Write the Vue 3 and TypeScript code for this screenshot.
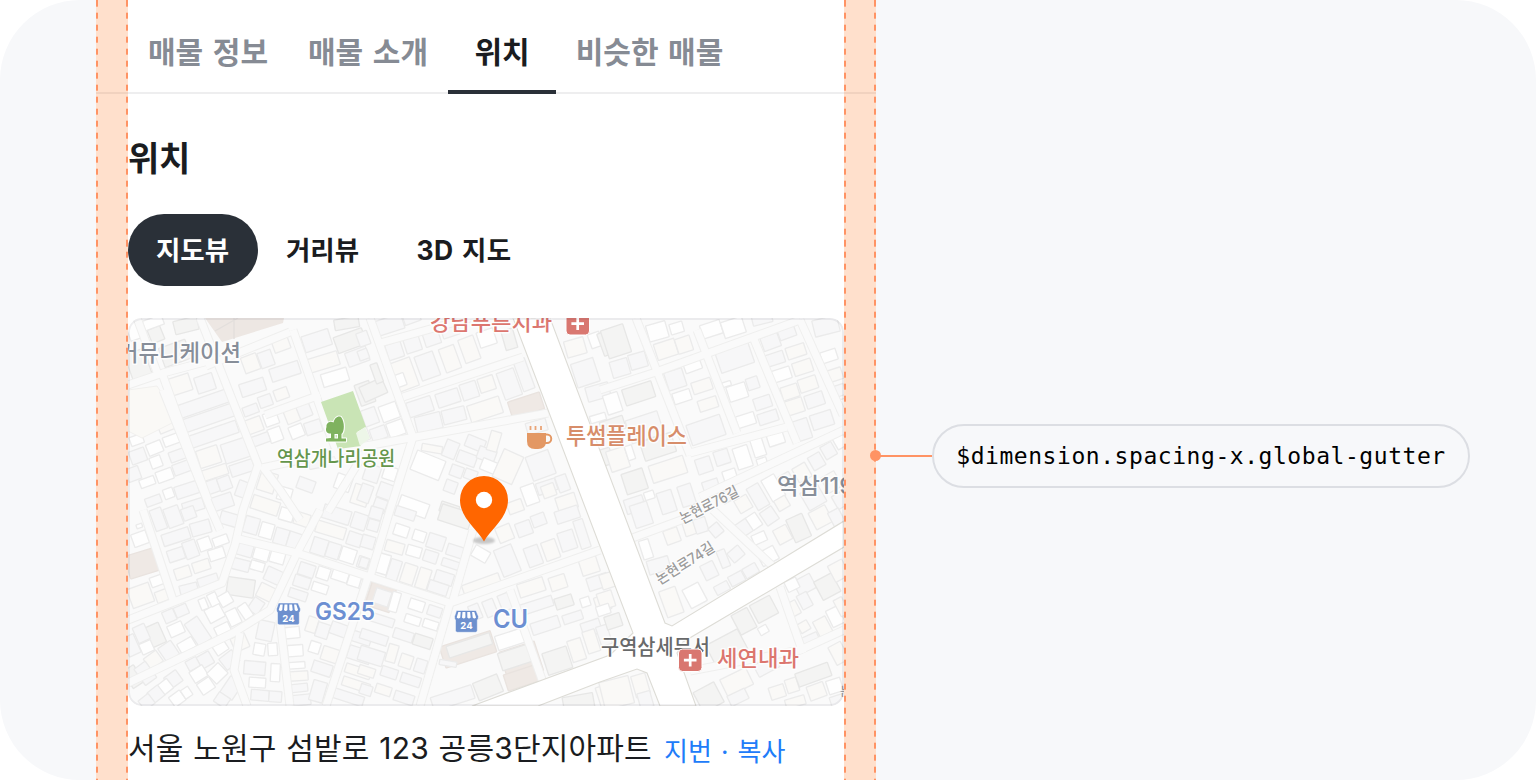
<script setup lang="ts">
type Kind = 'plain' | 'white' | 'cream' | 'beige' | 'gray'
interface Building { cx: number; cy: number; w: number; h: number; rot: number; kind: Kind }
interface Tile { x: number; y: number; buildings: Building[] }
interface MapLabel { text: string; x: number; y: number; size: number; length: number; color: string; weight: number; halo: number; rot: number }

const kinds: Record<string, Kind> = { p: 'plain', w: 'white', c: 'cream', b: 'beige', g: 'gray' }

// Each entry reads "cx cy width height rotation kind", in thirds of a pixel from the tile origin.
function tile(x: number, y: number, source: string): Tile {
  const buildings = source.trim().split(',').map((entry) => {
    const [cx, cy, w, h, rot, kind] = entry.trim().split(' ')
    return { cx: +cx, cy: +cy, w: +w, h: +h, rot: +rot, kind: kinds[kind] }
  })
  return { x, y, buildings }
}

const tiles: Tile[] = [
  tile(120, 310, `
    198 46 72 40 -14 g,108 74 40 44 -22 g,55 165 60 84 -20 g,165 130 84 60 -20 g,100 38 60 30 -20 w,40 60 36 60 -20 w,
    178 224 70 52 -18 c,255 220 56 50 -18 p,392 160 48 50 -20 c,438 147 42 48 -20 p,483 103 50 40 -20 c,495 184 90 40 -18 p,
    590 92 84 50 -18 p,610 156 94 42 -17 c,690 92 90 50 -20 g,712 140 66 44 -20 p,680 40 74 32 -10 g,645 202 80 40 -17 w,
    398 232 76 40 -18 p,484 252 42 34 -20 c,248 282 160 40 -19 p,262 325 164 40 -19 p,278 374 156 38 -19 p,392 300 46 28 -20 p,
    436 273 40 34 -20 p,402 346 50 44 -20 c,453 326 42 40 -20 w,466 374 40 42 -20 w,422 388 54 30 -20 p,516 316 42 44 -22 c,
    553 302 40 42 -22 p,530 364 42 38 -22 w,580 352 50 38 -18 p,138 350 46 30 -22 c,104 414 46 36 -22 w,154 390 48 30 -20 w,
    50 390 40 28 -20 w,54 438 48 40 -20 p,108 456 34 34 -20 w,172 436 48 32 -20 p,184 474 50 34 -20 p,82 516 46 26 -20 w,
    134 496 50 34 -20 w,40 492 40 40 -20 p,266 440 66 54 -18 c,346 422 76 60 -18 p,282 488 84 32 -18 c,366 474 72 36 -18 p,
    442 516 52 60 18 c,494 552 42 40 16 w,558 524 52 36 20 p,670 518 48 46 20 w,722 556 50 60 18 c,276 530 40 40 -20 p,
    314 520 38 40 -20 p,368 538 36 48 20 p,200 540 70 38 -18 p,146 550 30 30 -20 w,100 572 48 26 -20 p,306 576 66 42 -18 p,
    220 588 64 34 -18 p,436 586 84 42 18 c,586 458 40 34 -10 p,735 250 46 66 -20 g,728 374 36 40 -20 w`),
  tile(360, 310, `
    90 44 80 46 -18 p,155 24 50 30 -20 p,104 122 48 48 -18 p,158 104 48 44 -18 p,216 86 48 40 -18 p,270 60 52 40 -18 p,
    132 194 66 90 -20 c,202 168 58 76 -20 p,270 146 48 74 -20 c,328 118 48 74 -20 c,380 84 52 48 -18 w,448 88 36 60 -16 g,
    122 210 28 38 -20 w,40 240 74 48 -24 g,50 190 22 60 -20 g,10 86 34 42 -20 p,10 134 30 30 -20 p,88 306 54 50 -20 w,
    30 320 44 50 -20 p,108 356 50 46 -20 w,56 370 48 38 -20 p,180 290 76 46 -18 p,264 264 70 42 -18 p,328 242 50 50 -18 p,
    380 222 48 44 -18 c,448 222 54 84 -20 p,492 194 36 96 -20 p,375 298 100 52 -18 c,206 338 78 50 -14 p,282 316 70 42 -14 p,
    498 286 100 52 -18 b,216 416 62 22 10 c,272 418 40 52 22 p,320 446 58 36 20 p,346 400 58 36 22 p,380 434 54 38 20 p,
    402 394 32 60 16 c,386 468 46 36 22 w,290 484 38 34 20 p,332 494 38 30 20 p,272 530 36 36 20 p,204 466 92 62 22 w,
    90 490 40 40 18 w,36 490 46 50 18 p,78 544 48 46 20 p,16 550 36 54 20 p,60 586 38 40 20 p,160 590 90 44 20 w,
    268 596 56 30 18 g,444 470 64 90 24 c,542 466 72 76 -20 p,560 530 60 36 -18 p,510 554 42 60 -20 w,566 542 40 38 -20 c,
    608 520 34 50 -20 p,620 578 60 46 -18 c,466 590 46 36 -20 c,530 350 62 36 -16 p,646 112 60 50 -16 c,676 188 70 74 -18 p,
    706 90 36 44 -20 w,738 100 34 70 -20 g,714 246 70 44 -16 p,714 324 48 22 -16 w,740 440 30 50 -16 g`),
  tile(600, 310, `
    48 94 70 88 -18 g,60 174 54 50 -16 p,114 152 52 46 -16 p,172 64 60 50 -16 w,230 54 40 32 -16 w,198 118 64 50 -18 c,
    252 104 46 46 -18 c,334 58 62 42 -18 w,400 52 66 50 -18 w,404 142 104 66 -19 p,512 96 54 42 -20 p,560 66 52 38 -20 p,
    526 146 54 36 -18 p,588 124 58 36 -18 c,544 194 58 36 -18 w,608 172 58 40 -18 c,624 222 56 40 -18 c,570 246 52 40 -18 c,
    582 290 58 44 -18 c,644 270 56 40 -18 p,666 330 66 46 -18 p,604 360 52 62 -18 p,687 138 48 34 -18 w,706 194 42 36 -18 c,
    716 242 38 34 -18 p,724 286 34 34 -18 w,678 48 76 50 -14 p,486 26 60 32 -14 p,276 162 52 44 -20 w,226 208 56 56 -18 p,
    246 260 54 34 -18 w,306 228 60 36 -18 c,324 282 58 34 -18 c,380 222 26 14 -18 w,412 246 58 46 -18 w,458 220 36 36 -18 p,
    488 278 52 36 -18 p,504 322 60 34 -18 p,438 330 56 36 -18 w,318 360 106 64 -19 p,116 250 92 50 -18 g,38 280 46 60 -18 w,
    134 352 100 72 -18 p,38 346 72 40 -18 g,54 448 58 64 -18 c,90 428 22 44 -18 w,174 410 98 60 -18 g,204 478 108 54 -18 c,
    104 514 66 64 -18 g,148 556 30 24 -18 w,104 584 58 44 -18 p,200 576 46 66 -18 p,260 556 42 64 -18 p,312 466 46 46 -18 p,
    366 442 44 44 -18 p,428 442 46 66 -18 w,474 410 36 60 -18 w,488 462 30 36 -18 w,526 382 50 46 -18 w,390 498 40 38 -18 w,
    334 532 48 44 -18 p,386 556 46 34 -28 p,430 582 42 44 -30 c,474 560 40 74 -30 p,520 534 44 74 -30 w,560 512 36 44 -30 p,
    606 488 44 48 -30 c,650 454 40 44 -30 p,686 422 38 42 -30 p,720 392 36 44 -30 w,546 580 38 36 -30 c,640 562 60 60 -30 p,
    694 516 46 52 -30 c,722 570 40 44 -30 p`),
  tile(120, 510, `
    115 28 36 66 -20 p,160 20 46 60 -20 p,206 10 40 36 -20 p,60 86 46 40 -20 w,58 48 18 12 -20 w,66 160 92 70 -17 b,
    168 80 84 36 -18 p,242 54 60 40 -16 p,168 134 50 36 -18 p,212 118 40 52 -20 p,254 102 38 38 -20 w,302 92 46 28 -20 w,
    290 132 48 34 -18 w,188 188 48 34 -18 c,244 168 52 32 -18 c,112 212 42 30 -20 w,62 256 68 60 -20 c,126 258 38 34 -20 c,
    206 236 54 28 -14 p,264 212 62 28 -18 p,330 28 60 38 16 p,394 46 44 50 16 p,440 62 40 46 16 w,484 80 42 48 16 p,
    524 92 42 48 18 p,500 14 42 38 16 w,546 28 46 38 18 c,650 14 84 42 17 p,632 60 90 36 17 c,718 34 44 48 18 p,
    704 88 44 40 18 p,374 118 50 40 16 p,424 132 46 38 16 w,472 142 44 36 16 w,360 164 58 34 14 p,412 168 42 28 16 w,
    462 198 54 42 24 p,362 232 82 54 8 g,440 248 54 44 26 c,408 288 36 44 34 p,598 110 46 50 18 p,640 122 40 46 18 p,
    684 136 46 44 18 w,730 158 34 34 18 p,560 180 48 38 18 p,610 190 38 36 18 w,660 198 50 30 18 w,704 212 40 36 18 w,
    546 216 50 34 18 p,600 234 48 28 18 w,534 254 56 28 18 p,284 310 50 44 -28 w,250 282 22 34 -22 w,280 268 28 38 -26 w,
    316 268 38 36 -30 w,340 322 36 48 -26 w,376 304 30 46 -34 w,308 358 46 30 -26 w,234 364 46 80 -34 p,168 358 46 36 -24 w,
    184 302 40 32 -24 p,148 318 36 36 -24 p,104 376 50 64 -24 g,64 370 38 50 -24 p,80 412 38 34 -24 w,146 424 46 50 -34 p,
    200 406 50 34 -30 w,100 450 46 40 -36 c,34 406 38 60 -24 p,40 500 40 60 -34 g,76 490 42 60 -36 p,256 450 42 40 -30 p,
    218 462 36 32 -28 p,236 492 46 38 -32 w,292 490 48 44 -44 w,328 450 48 42 -38 p,302 414 40 32 -34 w,258 528 44 38 -34 w,
    160 508 44 40 -36 p,136 530 36 36 -38 w,108 552 40 38 -38 p,172 566 40 36 -36 w,200 548 26 30 -34 w,80 576 38 36 -38 p,
    360 398 46 44 -24 c,436 362 48 58 12 p,418 418 34 36 10 w,458 418 28 38 -4 w,404 474 64 40 5 p,466 488 28 54 3 w,
    412 518 50 30 4 w,420 556 54 32 5 p,466 560 38 32 4 p,334 534 44 60 34 p,306 570 40 34 34 p,516 368 46 34 -6 w,
    526 422 46 34 -4 w,530 466 50 20 -4 w,536 498 56 28 -4 c,536 534 54 24 -6 p,544 570 56 32 -6 p,576 344 32 46 18 c,
    608 362 38 44 18 p,656 358 50 38 20 p,584 412 32 34 18 w,630 434 50 42 18 c,606 476 60 36 18 p,594 544 42 62 16 p,
    716 382 76 32 18 p,718 434 70 40 18 p,714 484 78 28 18 c,708 524 84 28 18 c,686 562 92 30 18 p,742 254 30 84 18 b`),
  tile(360, 510, `
    48 10 38 36 16 p,40 46 34 34 16 p,24 96 40 38 16 p,12 158 26 30 18 p,14 225 30 30 16 p,136 10 62 30 18 p,
    124 62 44 34 18 w,178 78 38 32 18 w,228 96 52 44 18 p,288 124 56 34 18 p,104 112 56 34 16 c,162 124 44 32 16 w,
    212 140 42 34 18 p,272 162 54 24 18 p,70 162 34 60 16 w,102 180 34 62 18 p,146 192 40 60 18 c,190 206 36 62 18 c,
    252 204 56 36 18 p,234 234 60 34 18 p,286 20 96 50 18 g,62 262 76 72 18 b,66 262 48 46 18 p,104 276 26 60 16 w,
    170 286 46 32 18 w,224 304 42 30 18 p,158 330 48 26 18 w,212 344 46 26 18 w,434 70 46 48 -22 c,492 56 46 42 -20 p,
    536 30 42 36 -20 p,622 14 72 38 -18 p,666 72 30 88 -18 p,622 92 48 58 -18 p,572 120 44 58 -20 c,520 138 44 60 -20 p,
    442 152 56 86 -22 p,362 132 50 36 30 w,364 222 116 30 -20 c,514 232 80 42 -18 c,594 218 50 42 -18 c,688 168 54 48 -18 c,
    714 216 64 40 -18 p,530 286 100 32 -18 p,612 276 54 34 -18 g,556 346 86 36 -18 p,638 322 60 28 -18 p,694 354 58 44 -18 p,
    676 276 28 28 -18 w,728 280 44 46 -18 c,390 294 34 50 -22 p,436 276 34 50 -22 p,346 306 32 46 -22 p,450 388 84 44 -18 w,
    324 418 160 66 -18 b,328 406 136 36 -18 g,264 460 52 16 10 p,484 454 110 92 -18 b,466 442 96 54 -18 g,484 504 98 50 -18 b,
    592 452 76 68 -18 g,650 420 42 66 -18 c,694 394 38 68 -18 c,732 376 34 60 -18 p,384 532 78 56 -22 g,278 564 128 42 -18 p,
    130 376 60 30 18 p,188 394 56 34 18 g,96 430 30 54 16 c,138 454 38 40 18 c,182 468 34 40 18 p,88 488 50 30 18 p,
    152 510 60 30 18 p,70 540 48 28 18 c,132 564 60 30 18 p,18 540 36 30 18 p,34 438 76 44 17 p,20 484 50 28 18 c,
    42 382 84 30 18 p,66 330 74 26 18 p,656 580 92 50 -10 g,740 560 50 70 -18 c`),
  tile(600, 510, `
    124 14 54 70 -18 p,216 78 44 44 -20 c,268 54 34 44 -18 c,302 46 38 44 -18 p,348 60 34 36 -40 p,138 118 30 58 -18 w,
    176 166 66 42 -16 p,408 132 42 36 -40 p,370 146 26 54 -22 p,328 182 42 48 -26 p,284 256 54 62 -28 w,214 276 52 82 -20 c,
    366 234 44 28 -28 p,410 206 46 32 -28 p,452 182 44 32 -30 p,504 138 54 44 -28 w,478 84 42 30 -24 w,432 54 42 44 -34 p,
    462 34 34 44 -34 w,508 18 42 46 -34 p,548 74 44 48 -28 c,596 54 52 74 -24 g,662 22 56 56 -28 c,710 24 36 50 -28 p,
    432 334 54 66 -28 g,492 298 68 60 -28 g,380 412 108 68 -28 g,490 360 28 24 -30 w,614 224 56 48 -28 p,682 230 60 62 -28 g,
    716 182 48 54 -28 c,576 224 38 34 -26 w,580 296 32 44 -28 c,614 272 34 46 -28 p,612 350 32 30 -30 c,630 392 56 34 -24 p,
    668 350 42 52 -28 c,706 320 40 54 -26 w,724 290 28 54 -28 c,22 212 40 46 -18 c,18 270 46 50 -18 c,40 334 48 40 -18 g,
    10 300 40 30 -18 w,326 562 70 68 -28 g,410 516 86 56 -26 c,414 562 58 34 -26 p,532 546 46 38 -18 c,576 526 36 42 -18 c,
    640 494 104 42 -20 g,650 544 52 44 -20 c,704 528 44 42 -18 w,716 574 48 38 -18 p,716 430 42 60 -28 c,500 468 70 40 -28 p,
    50 548 90 84 -14 c,122 526 44 66 -16 c,136 570 40 48 -16 p,586 576 60 28 -16 c`),
]

const streets: string[] = [
  'M200 318 258 465 243 510 235 545 222 583 128 620', 'M163 390 210 507 220 530', 'M128 385 163 373 212 360', 'M137 318 157 372',
  'M293 330 327 427 340 460', 'M262 468 360 447 410 438 548 413', 'M370 318 413 437 390 510 370 577', 'M403 397 523 357', 'M380 343 470 318',
  'M235 538 297 553 370 577 450 603 600 550', 'M450 603 420 706', 'M473 530 453 600', 'M143 510 173 600', 'M128 683 233 633 270 610 297 553 320 510',
  'M240 633 234 670 247 706', 'M280 620 290 706', 'M368 577 326 706', 'M636 318 690 455', 'M600 390 653 373 800 320', 'M800 320 843 415',
  'M697 330 737 433', 'M753 337 797 443', 'M690 453 787 427', 'M700 497 844 430', 'M627 540 700 513', 'M713 510 780 573', 'M780 587 803 653',
  'M690 671 800 650 844 630', 'M290 332 206 366', 'M265 415 320 395', 'M163 376 208 500', 'M510 590 545 688', 'M360 460 328 512', 'M262 466 280 490 300 520',
]

const labels: MapLabel[] = [
  { text: '커뮤니케이션', x: 118, y: 361, size: 23, length: 123, color: '#878e99', weight: 500, halo: 3, rot: 0 },
  { text: '강남푸른치과', x: 430, y: 330, size: 22, length: 122, color: '#dc766f', weight: 500, halo: 3, rot: 0 },
  { text: '역삼개나리공원', x: 277, y: 466, size: 20, length: 118, color: '#65964c', weight: 500, halo: 3, rot: 0 },
  { text: '투썸플레이스', x: 566, y: 444, size: 23, length: 121, color: '#d78d6a', weight: 500, halo: 3, rot: 0 },
  { text: '역삼119', x: 777, y: 494, size: 23, length: 77, color: '#878e99', weight: 500, halo: 3, rot: 0 },
  { text: '논현로76길', x: 683, y: 524, size: 15, length: 64, color: '#9c9c9c', weight: 500, halo: 2, rot: -27 },
  { text: '논현로74길', x: 660, y: 585, size: 15, length: 66, color: '#9c9c9c', weight: 500, halo: 2, rot: -32 },
  { text: 'GS25', x: 315, y: 620, size: 24, length: 60, color: '#6c8fd2', weight: 600, halo: 3, rot: 0 },
  { text: 'CU', x: 493, y: 628, size: 25, length: 35, color: '#6c8fd2', weight: 600, halo: 3, rot: 0 },
  { text: '구역삼세무서', x: 601, y: 654, size: 21, length: 109, color: '#68696a', weight: 500, halo: 3, rot: 0 },
  { text: '세연내과', x: 717, y: 666, size: 22, length: 82, color: '#dc766f', weight: 500, halo: 3, rot: 0 },
]
const crosses = [{ x: 565.5, y: 312 }, { x: 678, y: 648.5 }]
const stores = [{ x: 276.5, y: 603 }, { x: 454.5, y: 610.5 }]
const tabs = [
  { name: '매물 정보', active: false }, { name: '매물 소개', active: false },
  { name: '위치', active: true }, { name: '비슷한 매물', active: false },
]
const views = [{ name: '지도뷰', active: true }, { name: '거리뷰', active: false }, { name: '3D 지도', active: false }]
</script>

<template>
  <main class="stage">
    <section class="screen">
      <nav class="tabs">
        <span v-for="tab in tabs" :key="tab.name" class="tab" :class="{ active: tab.active }">{{ tab.name }}</span>
      </nav>
      <div class="content">
        <h2 class="title">위치</h2>
        <div class="views">
          <span v-for="view in views" :key="view.name" class="view" :class="{ active: view.active }">{{ view.name }}</span>
        </div>
        <div class="map">
          <svg width="716" height="388" viewBox="128 318 716 388">
            <rect x="128" y="318" width="716" height="388" fill="#fafafa" />
            <g v-for="(t, i) in tiles" :key="i" :transform="`translate(${t.x} ${t.y}) scale(.33333)`">
              <rect
                v-for="(b, j) in t.buildings" :key="j" :class="['building', b.kind]"
                :x="b.cx - b.w / 2" :y="b.cy - b.h / 2" :width="b.w" :height="b.h" rx="2"
                :transform="`rotate(${b.rot} ${b.cx} ${b.cy})`"
              />
            </g>
            <path d="M205 318H284L283 323 222 342Z" fill="#ede7e3" />
            <path d="M234 318V339M215 331 238 318" class="outline" />
            <path d="M128 390 157 386 166 400 174 422 142 438 128 431Z" fill="#faf9f6" stroke="#f1f0ee" />
            <g class="street-edge"><path v-for="d in streets" :key="d" :d="d" /></g>
            <g class="street"><path v-for="d in streets" :key="d" :d="d" /></g>
            <path d="M513 318 633 633 610 655 472 706H538L600 682 637 669 647 673 660 706H696L677 653 683 642 844 547V521L672 626 665 623 550 318Z" class="road" />
            <path d="M321 402 353 391 366 427 357 432 361 446 338 449Z" fill="#c9e4b5" />
            <path d="M356 433 365 427 370 438 360 446Z" fill="#edf6e8" />

            <text
              v-for="label in labels" :key="label.text" class="label" :x="label.x" :y="label.y" :fill="label.color"
              :font-size="label.size" :font-weight="label.weight" :textLength="label.length" lengthAdjust="spacingAndGlyphs"
              :stroke-width="label.halo" :transform="`rotate(${label.rot} ${label.x} ${label.y})`"
            >{{ label.text }}</text>

            <g stroke="#fff" stroke-width="2" stroke-linejoin="round" paint-order="stroke" fill="#7fb25f">
              <path d="M331 438V433.500C327 434 325 431 326.500 427C326 423 330 420.500 333.500 422.500C334.500 418 338 415.500 341 417C345 422 344.500 432 341.500 434V438.500H346V441.500H326V438.500ZM334.500 434V438.500H338V434Z" fill-rule="evenodd" />
            </g>
            <g v-for="c in crosses" :key="c.x" :transform="`translate(${c.x} ${c.y})`">
              <rect x=".5" y=".5" width="23.5" height="22.5" rx="4" fill="#d97770" stroke="#fff" />
              <path d="M12.2 5.5V18M5.9 11.7H18.500" stroke="#fff" stroke-width="2.7" />
            </g>
            <g transform="translate(527 426)">
              <path d="M3.500 0V4M8.500 0V4M14 0V4" stroke="#e9a477" stroke-width="1.8" />
              <path d="M19 8.500H20A4 4 0 0 1 20 17H18" fill="none" stroke="#e39864" stroke-width="2" />
              <path d="M0 7H19V15Q19 23 11 23H8Q0 23 0 15Z" fill="#e39864" />
            </g>
            <g v-for="s in stores" :key="s.x" :transform="`translate(${s.x} ${s.y})`">
              <path d="M2 0H21.500L24 6Q24 9 22.800 9.500V20Q22.800 21.800 21 21.800H2.800Q1 21.800 1 20V9.500Q0 9 0 6Z" fill="#6d90ce" stroke="#fff" stroke-width=".5" />
              <path d="M3.800 1.500H6.200L5.800 7Q4 9 2.200 7ZM8 1.500H10.900V7Q9.200 9 7.500 7ZM12.800 1.500H15.600L16.200 7Q14.500 9 12.800 7ZM17.600 1.500H19.800L21.600 7Q19.800 9 18.200 7Z" fill="#fff" />
              <text x="12" y="18.500" class="store-text">24</text>
            </g>
            <text x="840" y="696" font-size="12" fill="#8e9095">논</text>

            <ellipse cx="484" cy="540.5" rx="11" ry="3.6" fill="#000" opacity=".2" class="shadow" />
            <path d="M484 541.5C478 530 460 518 460 500A24 24 0 0 1 508 500C508 518 490 530 484 541.5Z" fill="#f60" />
            <circle cx="484" cy="500" r="8.2" fill="#fff" />
          </svg>
        </div>
        <div class="address">
          <span class="street-name">서울 노원구 섬밭로 123 공릉3단지아파트</span>
          <span class="links">지번 · 복사</span>
        </div>
      </div>
      <div class="gutter left"></div>
      <div class="gutter right"></div>
    </section>
    <aside class="annotation">
      <span class="connector"></span>
      <code class="token">$dimension.spacing-x.global-gutter</code>
    </aside>
  </main>
</template>

<style>
body { margin: 0; background: #fff; }
</style>

<style scoped>
.stage {
  box-sizing: border-box; width: 1536px; height: 780px; padding-left: 96px; display: flex; overflow: hidden;
  border-radius: 80px; background: #f7f8fa; color: #1a1c20;
  font-family: Inter, "Noto Sans CJK KR", sans-serif;
}
.screen { position: relative; width: 780px; height: 780px; flex: none; background: #fff; }
.tabs { box-sizing: border-box; display: flex; height: 94px; padding: 0 32px; border-bottom: 2px solid #eeeeef; }
.tab {
  box-sizing: border-box; height: 94px; width: 160px; display: flex; justify-content: center; align-items: center;
  padding-top: 13px; border-bottom: 4px solid transparent;
  color: #868b94; font-size: 30px; font-weight: 700; line-height: 40px; word-spacing: 2.5px; white-space: nowrap;
}
.tab.active { width: 108px; color: #1a1c20; border-bottom-color: #2a3038; }
.tab:last-child { width: 187px; }
.content { padding: 0 32px; }
.title { margin: 41px 0 0; height: 48px; font-size: 34px; line-height: 48px; font-weight: 700; letter-spacing: -.3px; }
.views { display: flex; margin-top: 31px; height: 72px; }
.view {
  box-sizing: border-box; width: 130px; height: 72px; border-radius: 36px; display: flex; justify-content: center;
  align-items: center; padding-right: 1px; font-size: 26.5px; font-weight: 700; line-height: 36px; word-spacing: 2px;
  white-space: nowrap;
}
.view.active { background: #2a3038; color: #fff; }
.view:last-child { width: 153px; letter-spacing: .3px; }
.map { position: relative; width: 716px; height: 388px; margin-top: 32px; border-radius: 14px; overflow: hidden; }
.map::after { content: ""; position: absolute; inset: 0; border: 2px solid rgba(0, 0, 30, .06); border-radius: 14px; }
.map svg { display: block; }
.building { stroke: #ebebeb; stroke-width: 4; }
.plain { fill: #f7f7f8; }
.white { fill: #fefefe; }
.cream { fill: #faf9f7; }
.gray { fill: #f4f4f3; stroke: #e7e7e6; }
.beige { fill: #efe9e5; stroke: #e9e3df; }
.outline { fill: none; stroke: #e3dfdc; stroke-width: 1.4; }
.street-edge { fill: none; stroke: #efefee; stroke-width: 9; stroke-linejoin: round; }
.street { fill: none; stroke: #fafafa; stroke-width: 7; stroke-linejoin: round; }
.road { fill: #fff; stroke: #dddcd6; stroke-width: 1.1; }
.label { stroke: #fff; stroke-opacity: .85; stroke-linejoin: round; paint-order: stroke; }
.store-text { fill: #fff; font-size: 9.5px; font-weight: 700; text-anchor: middle; }
.shadow { filter: blur(1px); }
.address { display: flex; align-items: baseline; margin-top: 20px; line-height: 44px; white-space: nowrap; }
.street-name { width: 536px; font-size: 30px; letter-spacing: .2px; word-spacing: 1px; }
.links { position: relative; top: 2px; color: #217cf9; font-size: 26px; letter-spacing: .1px; word-spacing: 1.5px; }
.gutter {
  position: absolute; top: 0; bottom: 0; width: 32px; background: rgba(255, 102, 0, .2);
}
.gutter.left { left: 0; }
.gutter.right { right: 0; }
.gutter::before, .gutter::after {
  content: ""; position: absolute; top: 0; bottom: 0; width: 2px;
  background: repeating-linear-gradient(#ff9364 0 6px, transparent 6px 11.975px) 0 .7px;
}
.gutter::before { left: 0; }
.gutter::after { right: 0; }
.annotation { position: relative; display: flex; align-items: center; align-self: flex-start; height: 64px; margin-top: 424px; }
.connector { position: relative; width: 56px; height: 2px; background: #ff9364; }
.connector::before {
  content: ""; position: absolute; left: -6px; top: -5px; width: 11px; height: 11px; border-radius: 50%; background: #ff9364;
}
.token {
  box-sizing: border-box; width: 538px; height: 64px; border: 2px solid #dcdee3; border-radius: 32px; text-align: center;
  color: #000; font-family: "DejaVu Sans Mono", monospace; font-size: 23px; line-height: 60px; letter-spacing: .55px;
}
</style>
